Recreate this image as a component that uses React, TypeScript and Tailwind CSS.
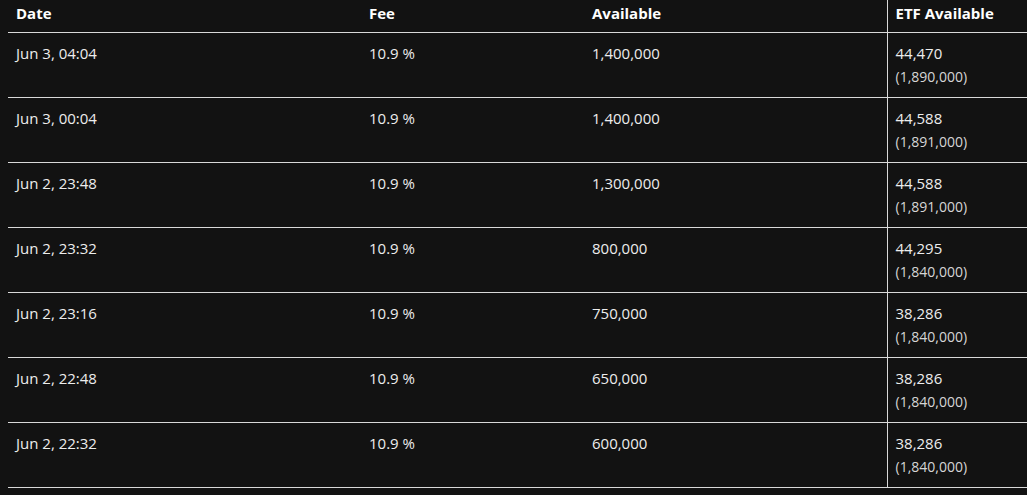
import React from 'react';

const rows = [
  { date: 'Jun 3, 04:04', fee: '10.9 %', available: '1,400,000', etf: '44,470', etfTotal: '(1,890,000)' },
  { date: 'Jun 3, 00:04', fee: '10.9 %', available: '1,400,000', etf: '44,588', etfTotal: '(1,891,000)' },
  { date: 'Jun 2, 23:48', fee: '10.9 %', available: '1,300,000', etf: '44,588', etfTotal: '(1,891,000)' },
  { date: 'Jun 2, 23:32', fee: '10.9 %', available: '800,000', etf: '44,295', etfTotal: '(1,840,000)' },
  { date: 'Jun 2, 23:16', fee: '10.9 %', available: '750,000', etf: '38,286', etfTotal: '(1,840,000)' },
  { date: 'Jun 2, 22:48', fee: '10.9 %', available: '650,000', etf: '38,286', etfTotal: '(1,840,000)' },
  { date: 'Jun 2, 22:32', fee: '10.9 %', available: '600,000', etf: '38,286', etfTotal: '(1,840,000)' },
];

const App: React.FC = () => {
  return (
    <div
      className="w-[1027px] h-[495px] overflow-hidden bg-[#121212] text-[#ededed] text-[15px] pl-[8px]"
      style={{ fontFamily: '"Open Sans", "Noto Sans", sans-serif' }}
    >
      <table className="table-fixed border-collapse w-[1100px]">
        <colgroup>
          <col className="w-[353px]" />
          <col className="w-[223px]" />
          <col className="w-[303px]" />
          <col />
        </colgroup>
        <thead>
          <tr className="h-[32px] border-b border-[#d9d9d9]">
            <th className="text-left font-bold px-[8px] pt-[1px] pb-[7px] leading-[24px] text-white">Date</th>
            <th className="text-left font-bold px-[8px] pt-[1px] pb-[7px] leading-[24px] text-white">Fee</th>
            <th className="text-left font-bold px-[8px] pt-[1px] pb-[7px] leading-[24px] text-white">Available</th>
            <th className="text-left font-bold px-[8px] pt-[1px] pb-[7px] leading-[24px] text-white border-l border-[#d9d9d9]">
              ETF Available
            </th>
          </tr>
        </thead>
        <tbody>
          {rows.map((row, i) => (
            <tr key={i} className="border-b border-[#d9d9d9] align-top">
              <td className="px-[8px] py-[8px] leading-[24px]">{row.date}</td>
              <td className="px-[8px] py-[8px] leading-[24px]">{row.fee}</td>
              <td className="px-[8px] py-[8px] leading-[24px]">{row.available}</td>
              <td className="px-[8px] py-[8px] leading-[24px] border-l border-[#d9d9d9]">
                <div>{row.etf}</div>
                <div className="text-[14px] text-[#d6d6d6]">{row.etfTotal}</div>
              </td>
            </tr>
          ))}
        </tbody>
      </table>
    </div>
  );
};

export default App;
